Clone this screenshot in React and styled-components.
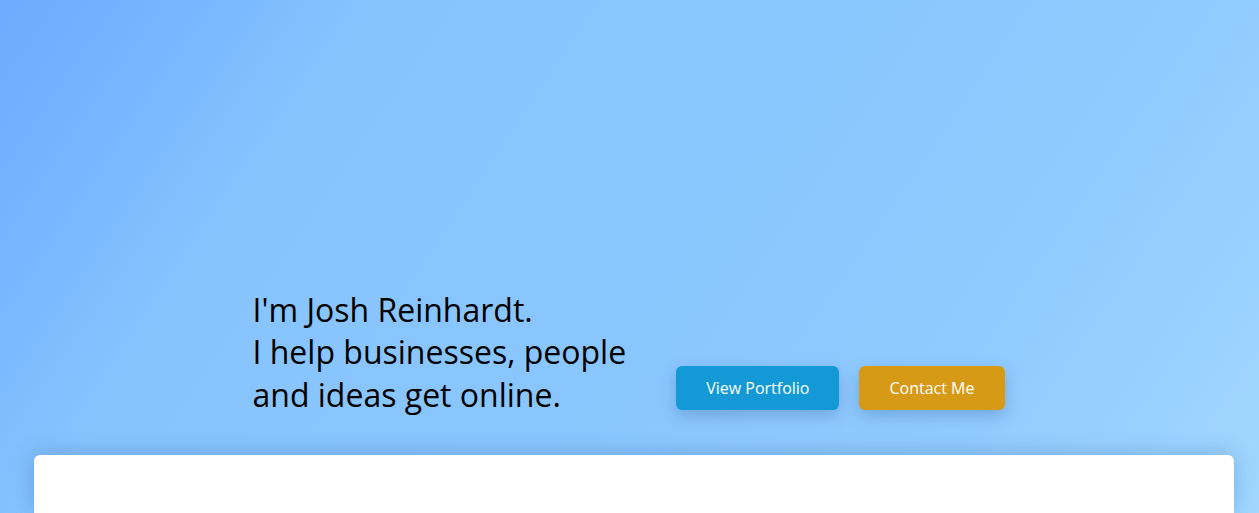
import React from 'react';
import styled, { createGlobalStyle } from 'styled-components';

const GlobalStyle = createGlobalStyle`
  html, body {
    margin: 0;
    padding: 0;
  }
  body {
    font-family: 'Open Sans', 'Noto Sans', sans-serif;
    overflow: hidden;
  }
`;

const Page = styled.div`
  min-height: 513px;
  background: linear-gradient(
    124deg,
    #6cabff 0%,
    #77b6ff 12%,
    #87c4fe 24%,
    #8ac6fe 55%,
    #91ccfe 78%,
    #a2d8ff 100%
  );
`;

const Hero = styled.section`
  height: 455px;
  box-sizing: border-box;
  display: flex;
  align-items: flex-end;
  justify-content: center;
  padding-bottom: 43px;
`;

const HeroRow = styled.div`
  display: flex;
  align-items: flex-end;
  gap: 50px;
  margin-left: -2px;
`;

const Intro = styled.h1`
  margin: 0 0 -4px;
  font-weight: 400;
  font-size: 32px;
  line-height: 42.5px;
  color: #000;
`;

const Actions = styled.div`
  display: flex;
  gap: 20px;
  margin-bottom: 2px;
`;

const Button = styled.a`
  display: inline-flex;
  align-items: center;
  justify-content: center;
  height: 44px;
  padding: 0 30px;
  border-radius: 6px;
  background: ${p => p.$bg};
  color: #fff;
  font-size: 16px;
  text-decoration: none;
  box-shadow: 0 6px 16px rgba(40, 80, 140, 0.28);
`;

const CardWrap = styled.div`
  padding-left: 34px;
`;

const Card = styled.div`
  width: 1200px;
  height: 58px;
  background: #fff;
  border-radius: 6px 6px 0 0;
  box-shadow: 0 0 22px rgba(40, 80, 140, 0.3);
`;

export default function App() {
  return (
    <>
      <GlobalStyle />
      <Page>
        <Hero>
          <HeroRow>
            <Intro>
              I'm Josh Reinhardt.
              <br />
              I help businesses, people
              <br />
              and ideas get online.
            </Intro>
            <Actions>
              <Button href="#portfolio" $bg="#1399d6">
                View Portfolio
              </Button>
              <Button href="#contact" $bg="#d69a17">
                Contact Me
              </Button>
            </Actions>
          </HeroRow>
        </Hero>
        <CardWrap>
          <Card />
        </CardWrap>
      </Page>
    </>
  );
}
